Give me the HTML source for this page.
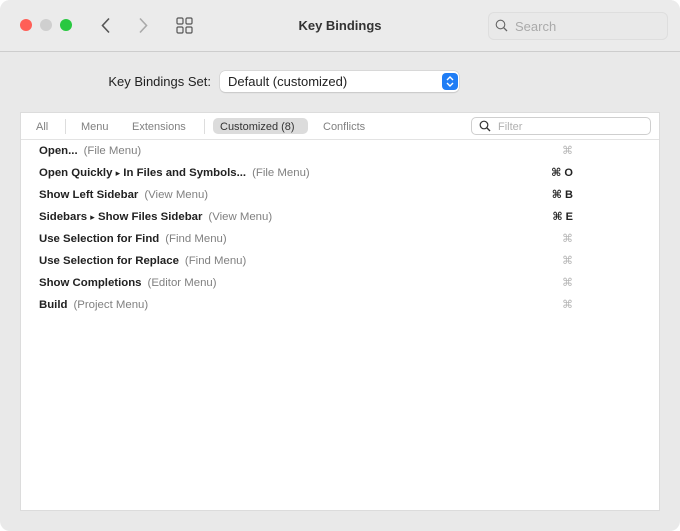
<!DOCTYPE html>
<html><head><style>
*{margin:0;padding:0;box-sizing:border-box}
body{width:680px;height:531px;background:#fff;font-family:"Liberation Sans","DejaVu Sans",sans-serif;overflow:hidden}
.win{position:absolute;left:0;top:0;width:680px;height:531px;background:#e9e9e9;border-radius:10px;overflow:hidden}
.tb{position:absolute;left:0;top:0;width:680px;height:52px;background:#ebebeb;border-bottom:1px solid #cdcdcd}
.dot{position:absolute;top:19px;width:12px;height:12px;border-radius:50%}
.abs{position:absolute;white-space:nowrap}
.panel{position:absolute;left:20px;top:112px;width:640px;height:399px;background:#fff;border:1px solid #dcdcdc}
.tabs{position:absolute;left:0;top:0;width:638px;height:27px;border-bottom:1px solid #e3e3e3}
.tab{position:absolute;top:8px;font-size:11px;color:#808080}
.row{position:absolute;left:18px;font-size:11.4px;line-height:14px;height:14px;color:#222;font-weight:bold;white-space:nowrap}
.row span{font-weight:normal;color:#808080;margin-left:6px}
.row i{font-style:normal;font-size:9px;line-height:14px;vertical-align:top}
.sc{position:absolute;right:86px;font-size:11px;line-height:14px;font-weight:bold;color:#222;text-align:right}
.sc.g{color:#b5b5b5;font-weight:normal}
</style></head><body>
<div class="win">
<div class="tb">
<div class="dot" style="left:20px;background:#ff5f57"></div>
<div class="dot" style="left:40px;background:#cfcfcf"></div>
<div class="dot" style="left:60px;background:#28c840"></div>
<svg class="abs" style="left:100px;top:17px" width="12" height="17"><path d="M9 1.5 L2.5 8.5 L9 15.5" fill="none" stroke="#555" stroke-width="1.6"/></svg>
<svg class="abs" style="left:137px;top:17px" width="12" height="17"><path d="M3 1.5 L9.5 8.5 L3 15.5" fill="none" stroke="#aaa" stroke-width="1.6"/></svg>
<svg class="abs" style="left:176px;top:17px" width="17" height="17"><g fill="none" stroke="#555" stroke-width="1.2"><rect x="1" y="1" width="6" height="6" rx="1.2"/><rect x="10" y="1" width="6" height="6" rx="1.2"/><rect x="1" y="10" width="6" height="6" rx="1.2"/><rect x="10" y="10" width="6" height="6" rx="1.2"/></g></svg>
<div class="abs" style="left:0;width:680px;text-align:center;top:18px;font-size:13px;font-weight:bold;color:#333">Key Bindings</div>
<div class="abs" style="left:488px;top:12px;width:180px;height:28px;border:1px solid #dedede;border-radius:6px;background:#e9e9e9"></div>
<svg class="abs" style="left:495px;top:19px" width="14" height="14"><circle cx="5.5" cy="5.5" r="4.3" fill="none" stroke="#666" stroke-width="1.1"/><path d="M8.7 8.7 L12 12" stroke="#666" stroke-width="1.3"/></svg>
<div class="abs" style="left:515px;top:19px;font-size:13px;color:#aaa">Search</div>
</div>
<div class="abs" style="left:0;width:211px;text-align:right;top:74px;font-size:13px;color:#222">Key Bindings Set:</div>
<div class="abs" style="left:220px;top:71px;width:239px;height:21px;background:#fff;border-radius:5px;box-shadow:0 0 0 0.5px #c8c8c8,0 1px 1px rgba(0,0,0,.15)"></div>
<div class="abs" style="left:228px;top:74px;font-size:13px;color:#222">Default (customized)</div>
<div class="abs" style="left:442px;top:73px;width:16px;height:17px;background:#1f7df5;border-radius:4px"></div>
<svg class="abs" style="left:442px;top:73px" width="16" height="17"><path d="M5 7 L8 4 L11 7 M5 10 L8 13 L11 10" fill="none" stroke="#fff" stroke-width="1.4"/></svg>
<div class="panel">
<div class="tabs">
<div class="tab" style="left:15px">All</div>
<div class="abs" style="left:44px;top:6px;width:1px;height:15px;background:#ddd"></div>
<div class="tab" style="left:60px">Menu</div>
<div class="tab" style="left:111px">Extensions</div>
<div class="abs" style="left:183px;top:6px;width:1px;height:15px;background:#ddd"></div>
<div class="abs" style="left:192px;top:5px;width:95px;height:16px;background:#dcdcdc;border-radius:5px"></div>
<div class="tab" style="left:199px;color:#333">Customized (8)</div>
<div class="tab" style="left:302px">Conflicts</div>
<div class="abs" style="left:450px;top:4px;width:180px;height:18px;border:1px solid #cfcfcf;border-radius:5px;background:#fff"></div>
<svg class="abs" style="left:458px;top:7px" width="13" height="13"><circle cx="5" cy="5" r="3.8" fill="none" stroke="#333" stroke-width="1.2"/><path d="M7.8 7.8 L11 11" stroke="#333" stroke-width="1.4"/></svg>
<div class="tab" style="left:477px;color:#b0b0b0">Filter</div>
</div>
<div class="row" style="top:31px">Open...<span>(File Menu)</span></div>
<div class="row" style="top:53px">Open Quickly <i>▸</i> In Files and Symbols...<span>(File Menu)</span></div>
<div class="row" style="top:75px">Show Left Sidebar<span>(View Menu)</span></div>
<div class="row" style="top:97px">Sidebars <i>▸</i> Show Files Sidebar<span>(View Menu)</span></div>
<div class="row" style="top:119px">Use Selection for Find<span>(Find Menu)</span></div>
<div class="row" style="top:141px">Use Selection for Replace<span>(Find Menu)</span></div>
<div class="row" style="top:163px">Show Completions<span>(Editor Menu)</span></div>
<div class="row" style="top:185px">Build<span>(Project Menu)</span></div>
<div class="sc g" style="top:31px">⌘</div>
<div class="sc" style="top:53px">⌘ O</div>
<div class="sc" style="top:75px">⌘ B</div>
<div class="sc" style="top:97px">⌘ E</div>
<div class="sc g" style="top:119px">⌘</div>
<div class="sc g" style="top:141px">⌘</div>
<div class="sc g" style="top:163px">⌘</div>
<div class="sc g" style="top:185px">⌘</div>
</div>
</div>
</body></html>
